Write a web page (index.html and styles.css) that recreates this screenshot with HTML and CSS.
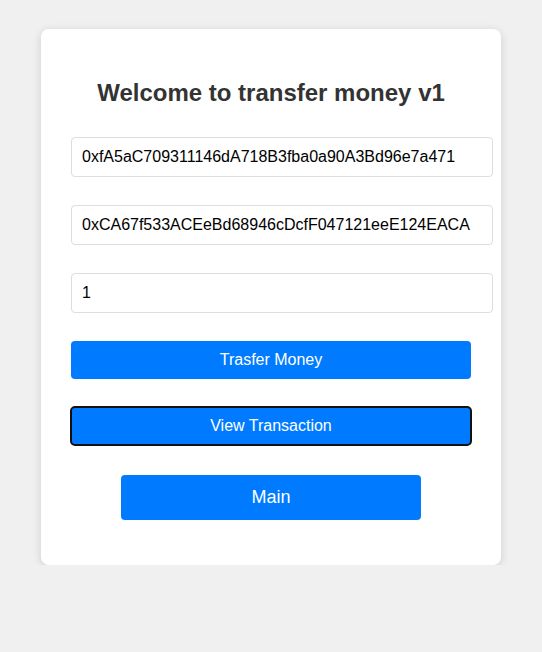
FILE: index.html
```html
<!DOCTYPE html>
<html>
<head>
<meta charset="utf-8">
<link rel="stylesheet" href="styles.css">
</head>
<body>
<div class="card">
  <h2 class="title">Welcome to transfer money v1</h2>
  <div class="form">
    <input class="field" type="text" value="0xfA5aC709311146dA718B3fba0a90A3Bd96e7a471">
    <input class="field" type="text" value="0xCA67f533ACEeBd68946cDcfF047121eeE124EACA">
    <input class="field" type="text" value="1">
    <button class="btn">Trasfer Money</button>
    <button class="btn btn-focus">View Transaction</button>
    <button class="btn btn-main">Main</button>
  </div>
</div>
</body>
</html>
```
FILE: styles.css
```css
html, body {
  margin: 0;
  padding: 0;
  background: #f0f0f0;
  font-family: "Liberation Sans", Arial, sans-serif;
}
body {
  padding-top: 29px;
}
.card {
  width: 400px;
  margin: 0 auto;
  padding: 30px;
  background: #fff;
  border-radius: 8px;
  box-shadow: 0 2px 10px rgba(0, 0, 0, 0.14);
}
.title {
  margin: 20px 0 30px;
  font-size: 24px;
  font-weight: bold;
  color: #333;
  text-align: center;
}
.form {
  display: flex;
  flex-direction: column;
  align-items: flex-start;
  gap: 28px;
}
.field {
  box-sizing: content-box;
  width: 100%;
  padding: 10px;
  border: 1px solid #ddd;
  border-radius: 4px;
  font-family: "Liberation Sans", Arial, sans-serif;
  font-size: 16px;
  line-height: 18px;
  height: 18px;
  color: #000;
  background: #fff;
  outline: none;
}
.btn {
  box-sizing: border-box;
  width: 100%;
  height: 38px;
  padding: 0;
  border: none;
  border-radius: 4px;
  background: #007bff;
  color: #fff;
  font-family: "Liberation Sans", Arial, sans-serif;
  font-size: 16px;
}
.btn-focus {
  outline: 2px solid #111;
  outline-offset: -1px;
}
.btn-main {
  align-self: center;
  width: 300px;
  height: 45px;
  margin-top: 2px;
  font-size: 18px;
  margin-bottom: 15px;
}
```
